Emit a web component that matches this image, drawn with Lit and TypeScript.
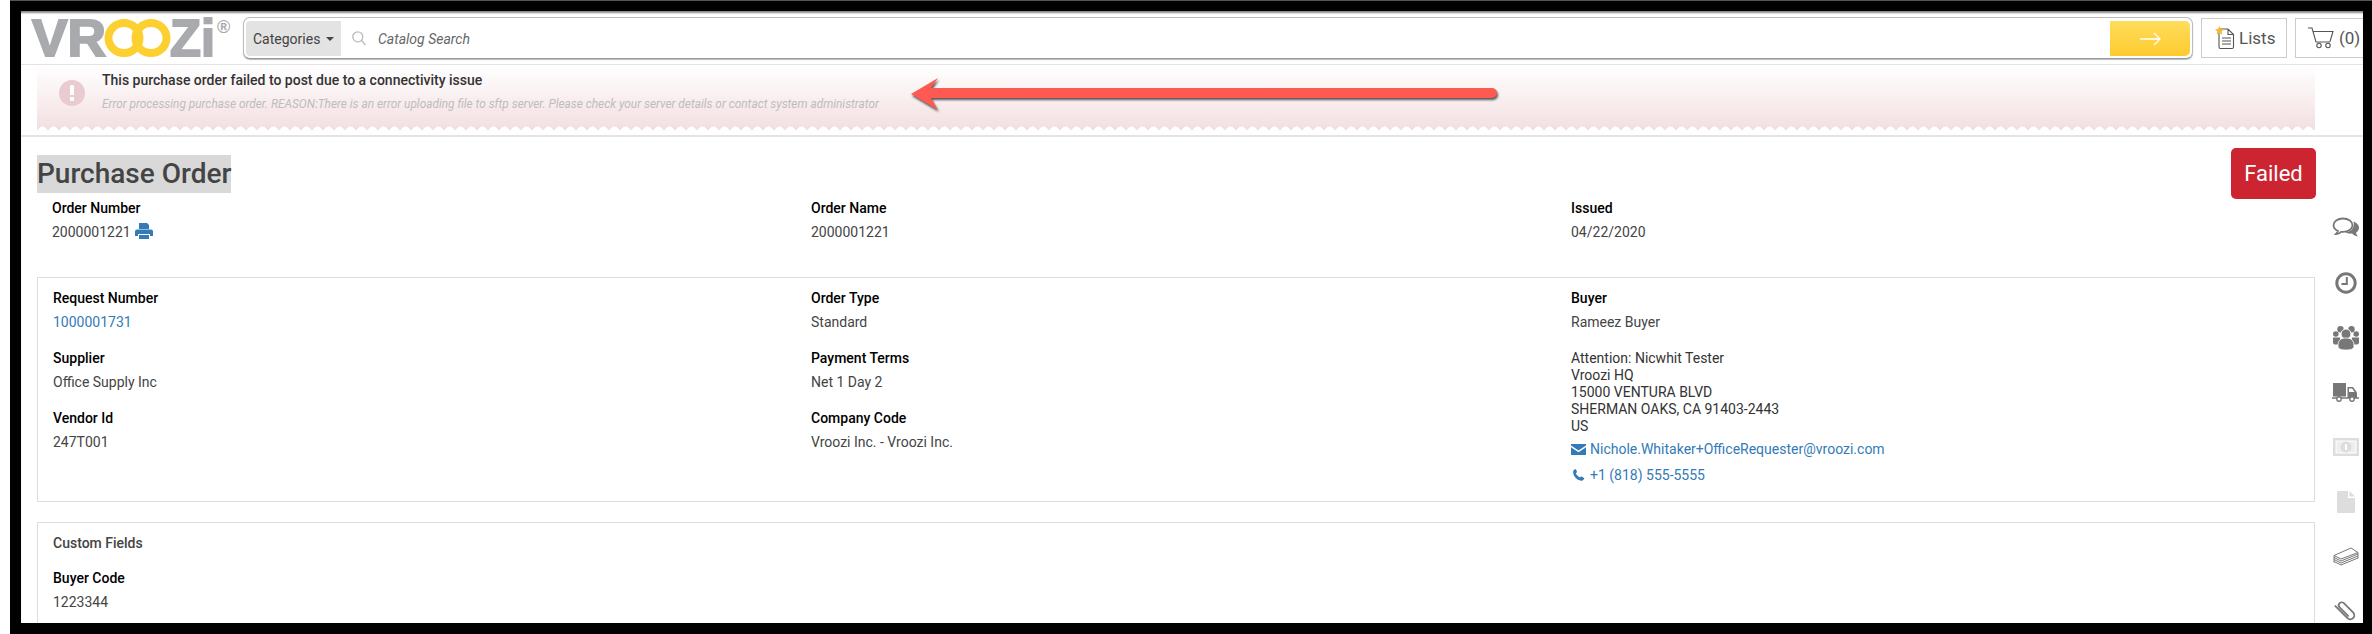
import { LitElement, html, svg, css } from 'lit';
import { customElement } from 'lit/decorators.js';

const railIcons = [
  svg`<svg width="28" height="22" viewBox="0 0 28 22"><path d="M21.500 4.500c3 1.200 5.500 3.300 5.500 6.300 0 2.100-1.200 3.800-3 5 .3 1.300 1 2.600 2 3.600-2.300-.2-4.600-1.200-6-2.800-2.500.3-5-.2-7-1.300 6-.2 10-4.300 8.500-10.800z" fill="#777"/><path d="M11 1.500C5.500 1.500 1.500 4.600 1.500 8.300c0 2.500 1.800 4.600 4.500 5.700-.4 1.200-1.200 2.200-2 3 2 0 4-.9 5.200-2.200.6.1 1.200.1 1.800.1 5.500 0 9.500-3 9.500-6.600S16.500 1.500 11 1.500z" fill="#fff" stroke="#777" stroke-width="1.800"/></svg>`,
  svg`<svg width="22" height="22" viewBox="0 0 22 22"><circle cx="11" cy="11" r="9.200" fill="none" stroke="#777" stroke-width="3"/><path d="M11.800 5v7H6.500" fill="none" stroke="#777" stroke-width="2"/></svg>`,
  svg`<svg width="26" height="24" viewBox="0 0 26 24" fill="#777"><circle cx="7.500" cy="3.200" r="3.200"/><circle cx="18.500" cy="3.200" r="3.200"/><circle cx="2.800" cy="8" r="2.800"/><circle cx="23.200" cy="8" r="2.800"/><path d="M0 11.500h7l1 7H2q-2 0-2-2zM26 11.500h-7l-1 7h6q2 0 2-2z"/><circle cx="13" cy="8" r="5" stroke="#fff" stroke-width="1"/><path d="M5 20c0-6 3-8 8-8s8 2 8 8c0 3-3 4-8 4s-8-1-8-4z" stroke="#fff" stroke-width=".8"/></svg>`,
  svg`<svg width="27" height="19" viewBox="0 0 27 19"><rect x="1" y="0" width="13" height="13.500" fill="#777"/><path d="M15.500 4h5.500l4 5.500v5.500H15.500z" fill="#777"/><path d="M17 5.500h3.200l2.300 3.500H17z" fill="#fff"/><path d="M0 15h27" stroke="#777" stroke-width="1.500"/><circle cx="7" cy="16" r="2.200" fill="#fff" stroke="#777" stroke-width="1.400"/><circle cx="20" cy="16" r="2.200" fill="#fff" stroke="#777" stroke-width="1.400"/></svg>`,
  svg`<svg width="26" height="18" viewBox="0 0 26 18"><path fill-rule="evenodd" d="M0 0h26v18H0zM2.500 2.500v13h21v-13z" fill="#ddd"/><path d="M3.500 3.500h19v11h-19z" fill="#eee"/><circle cx="13" cy="9" r="5.500" fill="#ddd"/><path d="M12 6h2v6h-2z" fill="#fff"/></svg>`,
  svg`<svg width="18" height="22" viewBox="0 0 18 22"><path d="M1 0h10v7h7v14a1 1 0 0 1-1 1H1a1 1 0 0 1-1-1V1a1 1 0 0 1 1-1zM12.500 0L18 5.500h-5.500z" fill="#ddd"/></svg>`,
  svg`<svg width="26" height="19" viewBox="0 0 26 19"><g fill="none" stroke="#777" stroke-width="1"><path d="M1 8.500L18 1l7 4.500L8 12z" fill="#fff"/><path d="M1 10.500L8 14l17-7"/><path d="M1 12.500L8 16l17-7"/><path d="M1 14.500L8 18l17-7"/><path d="M1 8.500v7M25 5.500v6"/></g></svg>`,
  svg`<svg width="24" height="24" viewBox="0 0 24 24"><path d="M8 1v17a4 4 0 0 0 8 0V5a3 3 0 0 0-6 0v12" transform="rotate(-45 12 12)" fill="none" stroke="#777" stroke-width="1.800" stroke-linecap="round"/></svg>`,
];

const columns = [
  [
    { label: 'Request Number', value: '1000001731', link: true },
    { label: 'Supplier', value: 'Office Supply Inc' },
    { label: 'Vendor Id', value: '247T001' },
  ],
  [
    { label: 'Order Type', value: 'Standard' },
    { label: 'Payment Terms', value: 'Net 1 Day 2' },
    { label: 'Company Code', value: 'Vroozi Inc. - Vroozi Inc.' },
  ],
];

@customElement('app-root')
export class AppRoot extends LitElement {
  static styles = css`
    :host {
      display: block;
      width: 2372px;
      height: 634px;
      overflow: hidden;
      background: #fff;
      font-family: Roboto, 'Liberation Sans', sans-serif;
      font-size: 14px;
      line-height: 20px;
      color: #444;
    }
    * {
      box-sizing: border-box;
    }
    .frame {
      height: 634px;
      margin-left: 10px;
      padding: 10px 9px 11px 11px;
      background: #000;
      border-top: 1px solid #555;
    }
    .page {
      position: relative;
      height: 100%;
      padding-top: 3px;
      overflow: hidden;
      background: #fff;
      box-shadow: inset 0 3px 2px -1px #888;
    }
    .header {
      display: flex;
      align-items: center;
      height: 51px;
      padding: 0 0 2px 11px;
      border-bottom: 1px solid #e3e3e3;
    }
    .logo {
      flex: none;
      width: 200px;
      height: 40px;
      overflow: visible;
    }
    .logo text {
      font-family: 'Liberation Sans', sans-serif;
      font-weight: 700;
    }
    .search {
      flex: 1;
      display: flex;
      align-items: center;
      height: 42px;
      margin-left: 11px;
      padding: 3px 2px 2px 2px;
      background: #fff;
      border: 1px solid #bbb;
      border-bottom: 1px solid #999;
      border-radius: 7px;
      box-shadow: 0 1px 1px #bbb;
    }
    .categories {
      display: flex;
      align-items: center;
      gap: 6px;
      height: 100%;
      width: 95px;
      padding-left: 7px;
      background: #e3e3e3;
      border-radius: 4px 0 0 4px;
    }
    .caret {
      width: 0;
      height: 0;
      border: 4px solid transparent;
      border-top-color: #444;
      border-bottom: 0;
    }
    .search-icon {
      margin-left: 11px;
    }
    .placeholder {
      margin-left: 12px;
      font-style: italic;
      color: #666;
    }
    .go {
      display: flex;
      align-items: center;
      justify-content: center;
      width: 80px;
      height: 100%;
      margin-left: auto;
      background: linear-gradient(#ffdc5c, #fdcb2e);
      border-radius: 0 5px 5px 0;
    }
    .tool {
      flex: none;
      display: flex;
      align-items: center;
      height: 40px;
      margin-left: 8px;
      border: 1px solid #ccc;
      font-size: 17px;
      color: #555;
    }
    .lists {
      width: 86px;
      gap: 4px;
      padding-left: 13px;
    }
    .cart {
      width: 70px;
      gap: 5px;
      padding-left: 12px;
      margin-right: -2px;
    }
    .notice {
      height: 72px;
      padding-bottom: 5px;
      border-bottom: 2px solid #e4e4e4;
    }
    .alert {
      position: relative;
      display: flex;
      align-items: flex-start;
      height: 65px;
      width: 2278px;
      margin-left: 16px;
      background: linear-gradient(#fff, #f3dfe1);
    }
    .alert::after {
      content: '';
      position: absolute;
      left: 0;
      right: 0;
      bottom: 0;
      height: 4px;
      background: conic-gradient(from 126deg at 50% 0, #fff 0 108deg, transparent 0) 0 0 / 11px 4px repeat-x;
    }
    .alert-icon {
      flex: none;
      display: flex;
      align-items: center;
      justify-content: center;
      width: 26px;
      height: 26px;
      margin: 15px 17px 0 22px;
      border-radius: 50%;
      background: #e9cbd0;
    }
    .alert-icon i {
      display: block;
      width: 4px;
      height: 16px;
      background: linear-gradient(#fff 0 10.500px, transparent 10.500px 12.500px, #fff 12.500px);
      border-radius: 1px;
    }
    .alert-title {
      margin-top: 5px;
      font-weight: 500;
      color: #333;
    }
    .alert-sub {
      margin-top: 4px;
      font-style: italic;
      font-size: 11.850px;
      color: #bdbdbd;
    }
    .arrow {
      position: absolute;
      left: 884px;
      top: 61px;
      overflow: visible;
      filter: drop-shadow(1px 2px 1px #555);
    }
    .body {
      display: flex;
    }
    .main {
      flex: none;
      width: 2278px;
      margin-left: 16px;
    }
    .title-row {
      display: flex;
      align-items: center;
      justify-content: space-between;
      height: 51px;
      margin: 11px -1px -1px 0;
    }
    h1 {
      margin: 0;
      height: 38px;
      font-size: 28px;
      line-height: 38px;
      font-weight: 500;
      color: #444;
      background: #d9d9d9;
    }
    .badge {
      width: 85px;
      height: 51px;
      font-size: 22px;
      line-height: 51px;
      text-align: center;
      color: #fff;
      background: #cc2431;
      border-radius: 5px;
    }
    .order {
      display: grid;
      grid-template-columns: 759px 760px 1fr;
      padding-left: 15px;
    }
    .label {
      font-weight: 500;
      color: #000;
    }
    .value {
      margin-top: 4px;
    }
    .print {
      vertical-align: -2px;
      margin-left: 1px;
    }
    a {
      color: #337ab7;
      text-decoration: none;
    }
    .card {
      padding: 10px 15px 15px;
      border: 1px solid #ddd;
    }
    .details {
      display: grid;
      grid-template-columns: 758px 760px 1fr;
      margin-top: 35px;
      padding-bottom: 16px;
    }
    .field + .field {
      margin-top: 16px;
    }
    .address {
      margin-top: 17.500px;
      line-height: 17px;
      color: #333;
    }
    .contact {
      display: flex;
      align-items: center;
      gap: 4px;
      margin-top: 6px;
    }
    .contact.first {
      margin-top: 4.500px;
    }
    .custom {
      margin-top: 20px;
      height: 120px;
    }
    .custom-title {
      margin-bottom: 15px;
      font-weight: 500;
      color: #444;
    }
    .rail {
      flex: none;
      display: grid;
      grid-auto-rows: 54.700px;
      justify-items: center;
      align-items: center;
      width: 33px;
      margin-left: 14px;
      padding-top: 64px;
    }
  `;

  render() {
    return html`
      <div class="frame">
        <div class="page">
          <div class="header">
            <svg class="logo" viewBox="0 0 200 40">
              <text x="0" y="38" font-size="52" fill="#a9aaad" stroke="#a9aaad" stroke-width="2" textLength="74" lengthAdjust="spacingAndGlyphs">VR</text>
              <text x="138" y="38" font-size="52" fill="#a9aaad" stroke="#a9aaad" stroke-width="2" textLength="45" lengthAdjust="spacingAndGlyphs">Zi</text>
              <ellipse cx="92" cy="20" rx="15.500" ry="15" fill="none" stroke="#fdd031" stroke-width="8"/>
              <ellipse cx="119" cy="20" rx="15.500" ry="15" fill="none" stroke="#fdd031" stroke-width="8"/>
              <text x="185" y="15" font-size="18" fill="#a9aaad">®</text>
            </svg>
            <div class="search">
              <div class="categories">Categories <span class="caret"></span></div>
              <svg class="search-icon" width="14" height="15" viewBox="0 0 14 15" fill="none" stroke="#bbb" stroke-width="1.300"><circle cx="5.800" cy="5.800" r="5"/><path d="M9.500 9.500l4 4.500"/></svg>
              <span class="placeholder">Catalog Search</span>
              <div class="go">
                <svg width="21" height="14" viewBox="0 0 21 14" fill="none" stroke="#fff" stroke-width="1.300"><path d="M0 7h20M14 1l6 6-6 6"/></svg>
              </div>
            </div>
            <div class="tool lists">
              <svg width="20" height="24" viewBox="0 0 20 24"><path d="M4 3h9l5.500 5.500V21a1.500 1.500 0 0 1-1.500 1.500H5.500A1.500 1.500 0 0 1 4 21zM13 3v5.500h5.500M7 12h9M7 15h9M7 18h9" fill="#fff" stroke="#555" stroke-width="1.100"/><path d="M4.500 0l1.300 3 3.200.3-2.400 2.100.7 3.100-2.800-1.600-2.800 1.600.7-3.100L0 3.300 3.200 3z" fill="#f5b731"/></svg>
              Lists
            </div>
            <div class="tool cart">
              <svg width="26" height="22" viewBox="0 0 26 22" fill="none" stroke="#555" stroke-width="1.100"><path d="M0 1h4l4 14h14M5.500 4.500H25l-3 10"/><circle cx="11" cy="18.500" r="2.200"/><circle cx="20" cy="18.500" r="2.200"/></svg>
              (0)
            </div>
          </div>

          <div class="notice">
            <div class="alert">
              <div class="alert-icon"><i></i></div>
              <div>
                <div class="alert-title">This purchase order failed to post due to a connectivity issue</div>
                <div class="alert-sub">Error processing purchase order. REASON:There is an error uploading file to sftp server. Please check your server details or contact system administrator</div>
              </div>
            </div>
          </div>

          <svg class="arrow" width="592" height="40" viewBox="0 0 592 40">
            <path d="M6 22L33 6l-7 10h561a5 5 0 0 1 0 10H26l7 12z" fill="#ff5a52"/>
          </svg>

          <div class="body">
            <div class="main">
              <div class="title-row">
                <h1>Purchase Order</h1>
                <div class="badge">Failed</div>
              </div>

              <div class="order">
                <div>
                  <div class="label">Order Number</div>
                  <div class="value">
                    2000001221
                    <svg class="print" width="18" height="16" viewBox="0 0 18 16" fill="#337ab7"><path d="M4 0h8l2 2v4H4zM2 6.500h14a2 2 0 0 1 2 2V13h-3v-2H3v2H0V8.500a2 2 0 0 1 2-2zM4 12h10v4H4z"/></svg>
                  </div>
                </div>
                <div>
                  <div class="label">Order Name</div>
                  <div class="value">2000001221</div>
                </div>
                <div>
                  <div class="label">Issued</div>
                  <div class="value">04/22/2020</div>
                </div>
              </div>

              <div class="card details">
                ${columns.map(
                  (col) => html`<div>
                    ${col.map(
                      (f) => html`<div class="field">
                        <div class="label">${f.label}</div>
                        <div class="value">${f.link ? html`<a href="#">${f.value}</a>` : f.value}</div>
                      </div>`
                    )}
                  </div>`
                )}
                <div>
                  <div class="label">Buyer</div>
                  <div class="value">Rameez Buyer</div>
                  <div class="address">
                    Attention: Nicwhit Tester<br />Vroozi HQ<br />15000 VENTURA BLVD<br />SHERMAN OAKS, CA 91403-2443<br />US
                  </div>
                  <div class="contact first">
                    <svg width="15" height="11" viewBox="0 0 15 11" fill="#337ab7"><path d="M0 0h15v1.500L7.500 6.500 0 1.500zM0 3.300l7.500 5 7.500-5V11H0z"/></svg>
                    <a href="#">Nichole.Whitaker+OfficeRequester@vroozi.com</a>
                  </div>
                  <div class="contact">
                    <svg width="15" height="12" viewBox="0 0 12 12" fill="#337ab7"><path d="M2.600.3L1 1.200C.2 3 .7 6 2.800 8.400c2.200 2.400 5.200 3.500 7.300 3.200l1.500-1.500c.3-.4.200-.8-.1-1L9.300 7.500c-.4-.2-.7-.1-1 .2l-.8.9C6 8 3.800 5.800 3.300 4.300l.9-.8c.3-.3.300-.6.200-1L3.500.6C3.300.2 3 .1 2.600.3z"/></svg>
                    <a href="#">+1 (818) 555-5555</a>
                  </div>
                </div>
              </div>

              <div class="card custom">
                <div class="custom-title">Custom Fields</div>
                <div class="label">Buyer Code</div>
                <div class="value">1223344</div>
              </div>
            </div>

            <div class="rail">${railIcons}</div>
          </div>
        </div>
      </div>
    `;
  }
}
